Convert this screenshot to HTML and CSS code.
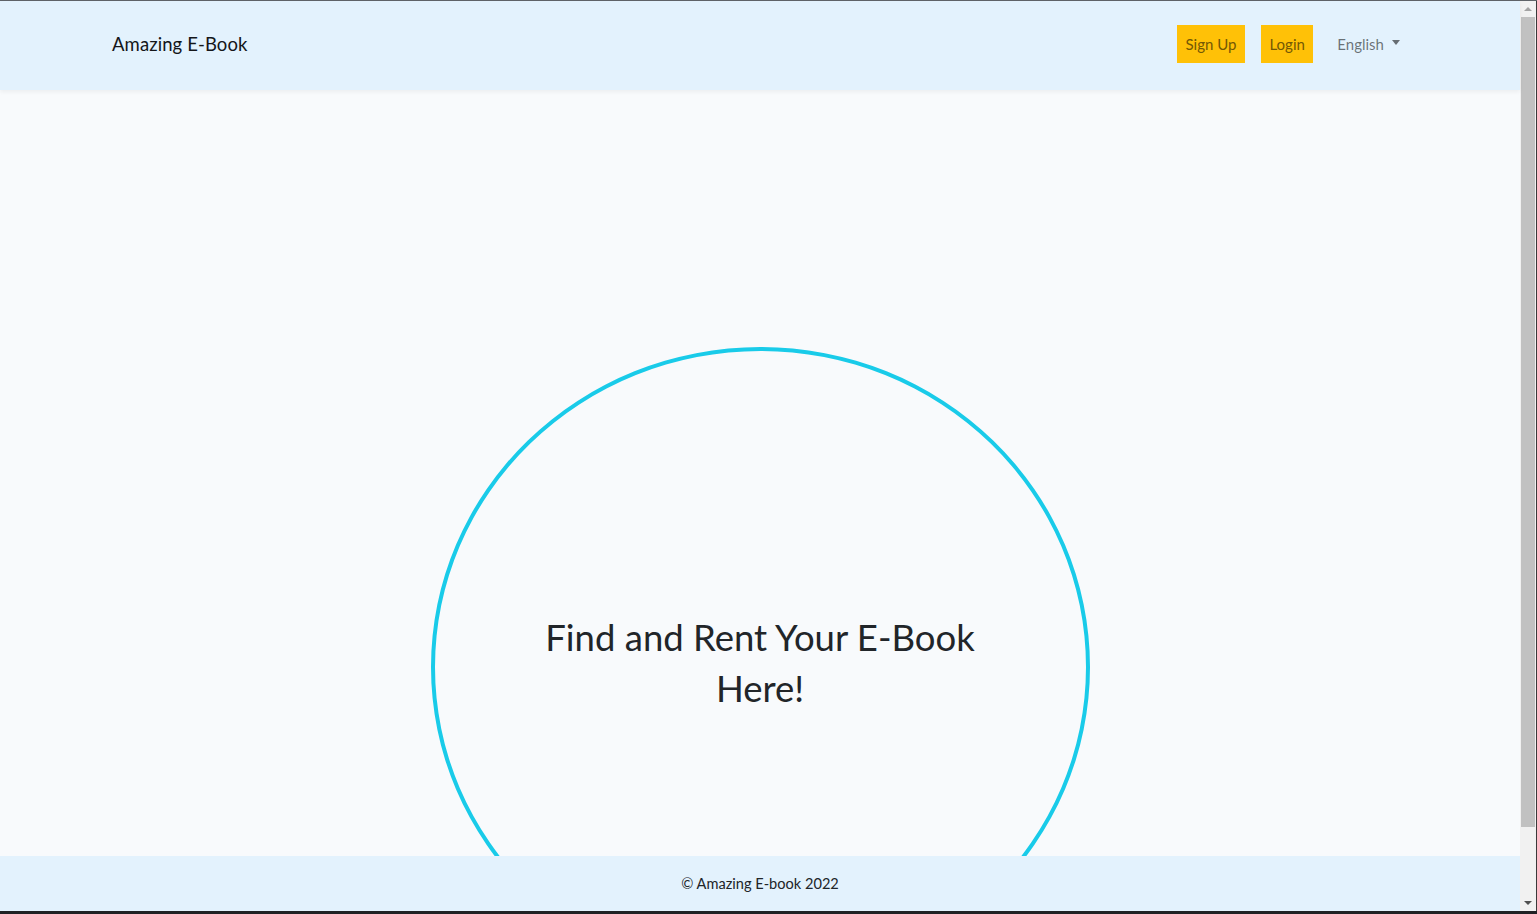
FILE: index.html
```html
<!DOCTYPE html>
<html lang="en">
<head>
<meta charset="utf-8">
<title>Amazing E-Book</title>
<link rel="stylesheet" href="styles.css">
</head>
<body>
<div class="window">
  <div class="topline"></div>
  <div class="row">
    <div class="page">
      <nav class="navbar">
        <div class="container">
          <a class="brand" href="#">Amazing E-Book</a>
          <div class="nav-right">
            <a class="btn-nav" href="#">Sign Up</a>
            <a class="btn-nav" href="#">Login</a>
            <a class="lang" href="#">English <span class="caret"></span></a>
          </div>
        </div>
      </nav>
      <main class="main">
        <div class="circle">
          <h1 class="hero">Find and Rent Your E-Book Here!</h1>
        </div>
      </main>
      <footer class="footer">© Amazing E-book 2022</footer>
    </div>
    <div class="scrollbar">
      <div class="arrow up"></div>
      <div class="thumb"></div>
      <div class="track"></div>
      <div class="arrow down"></div>
    </div>
  </div>
  <div class="taskbar"></div>
</div>
</body>
</html>
```
FILE: styles.css
```css
html, body {
  margin: 0;
  padding: 0;
  height: 100%;
  overflow: hidden;
}
body {
  font-family: Lato, "Noto Sans", sans-serif;
  color: #212529;
  background: #2a2a2a;
}
.window {
  display: flex;
  flex-direction: column;
  height: 914px;
  width: 1537px;
}
.topline {
  height: 1px;
  background: #5f6368;
  flex: none;
}
.row {
  flex: 1;
  display: flex;
  min-height: 0;
}
.page {
  flex: 1;
  display: flex;
  flex-direction: column;
  background: #f8fafc;
  min-width: 0;
}
.navbar {
  height: 89px;
  flex: none;
  background: #e3f2fd;
  box-shadow: 0 2px 4px rgba(0, 0, 0, 0.05);
  position: relative;
  z-index: 2;
  display: flex;
  align-items: center;
  padding-bottom: 4px;
  box-sizing: border-box;
}
.container {
  width: 1320px;
  margin: 0 auto;
  padding: 0 12px;
  box-sizing: border-box;
  display: flex;
  align-items: center;
  justify-content: space-between;
}
.brand {
  font-size: 18.5px;
  color: #141619;
  text-decoration: none;
  letter-spacing: 0.1px;
}
.nav-right {
  display: flex;
  align-items: center;
  gap: 16px;
}
.btn-nav {
  background: #ffc107;
  color: rgb(115, 88, 5);
  text-decoration: none;
  font-size: 15px;
  height: 38px;
  line-height: 38px;
  padding: 0 8.5px;
  box-sizing: border-box;
}
.lang {
  color: rgba(0, 0, 0, 0.55);
  text-decoration: none;
  font-size: 15px;
  padding: 0 8px;
  display: flex;
  align-items: center;
  gap: 8px;
}
.caret {
  width: 0;
  height: 0;
  border-left: 4.5px solid transparent;
  border-right: 4.5px solid transparent;
  border-top: 5px solid rgba(0, 0, 0, 0.55);
  margin-top: -2px;
}
.main {
  flex: 1;
  overflow: hidden;
  display: flex;
  justify-content: center;
  padding-top: 257px;
  min-height: 0;
}
.circle {
  flex: none;
  width: 659px;
  height: 640px;
  box-sizing: border-box;
  border: 4px solid #19cbe9;
  border-radius: 50%;
  display: flex;
  align-items: center;
  justify-content: center;
  padding-bottom: 8px;
}
.hero {
  margin: 0;
  font-weight: 400;
  font-size: 36.5px;
  line-height: 51px;
  text-align: center;
  max-width: 470px;
  color: #212529;
}
.footer {
  height: 55px;
  flex: none;
  background: #e3f2fd;
  display: flex;
  align-items: center;
  justify-content: center;
  font-size: 14.6px;
  color: #212529;
  position: relative;
  z-index: 2;
}
.scrollbar {
  width: 17px;
  flex: none;
  background: #f1f1f1;
  display: flex;
  flex-direction: column;
  border-right: 1px solid #3a3a3a;
  box-sizing: border-box;
}
.arrow {
  height: 16px;
  flex: none;
  display: flex;
  align-items: center;
  justify-content: center;
}
.arrow.up::before {
  content: "";
  border-left: 4px solid transparent;
  border-right: 4px solid transparent;
  border-bottom: 4px solid #a3a3a3;
}
.arrow.down::before {
  content: "";
  border-left: 4px solid transparent;
  border-right: 4px solid transparent;
  border-top: 4px solid #505050;
}
.thumb {
  height: 810px;
  flex: none;
  background: #c1c1c1;
  margin: 0 1px;
}
.track {
  flex: 1;
}
.taskbar {
  height: 3px;
  flex: none;
  background: #202124;
}
```
